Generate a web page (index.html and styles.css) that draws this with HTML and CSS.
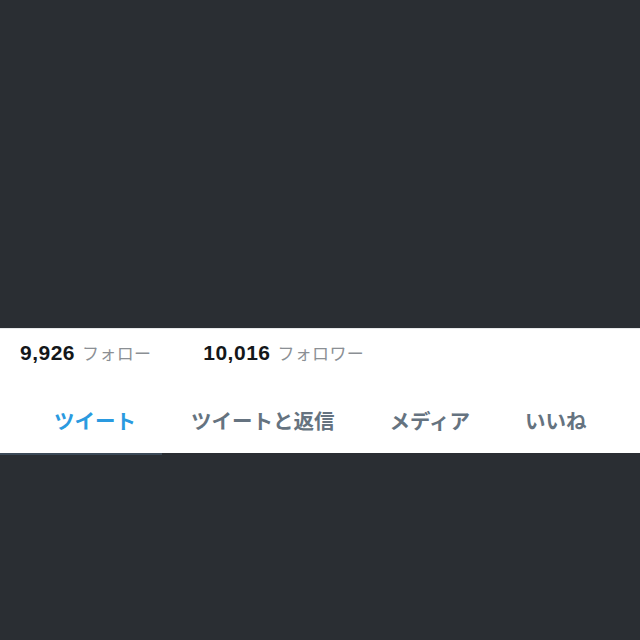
FILE: index.html
```html
<!DOCTYPE html>
<html lang="ja">
<head>
<meta charset="utf-8">
<link rel="stylesheet" href="styles.css">
</head>
<body>
<div class="top"></div>
<div class="band">
  <div class="stats">
    <div class="stat"><span class="num">9,926</span><span class="label">フォロー</span></div>
    <div class="stat"><span class="num">10,016</span><span class="label">フォロワー</span></div>
  </div>
  <div class="tabs">
    <div class="tab active">ツイート</div>
    <div class="tab">ツイートと返信</div>
    <div class="tab">メディア</div>
    <div class="tab">いいね</div>
  </div>
</div>
<div class="bottom">
  <div class="underline"></div>
</div>
</body>
</html>
```
FILE: styles.css
```css
html, body {
  margin: 0;
  padding: 0;
  background: #2a2e33;
  height: 640px;
  overflow: hidden;
}
.top {
  height: 328px;
}
.band {
  background: #ffffff;
  border-top: 1px solid #e6e8ea;
  height: 124px;
  display: flex;
  flex-direction: column;
}
.stats {
  display: flex;
  gap: 52px;
  padding-left: 20px;
  height: 46px;
  align-items: center;
}
.stat {
  display: flex;
  align-items: baseline;
  gap: 7px;
}
.num {
  font-family: "Liberation Sans", Arial, sans-serif;
  font-weight: 700;
  font-size: 21px;
  letter-spacing: 0.5px;
  color: #14171a;
}
.label {
  font-family: "Noto Sans CJK JP", sans-serif;
  font-size: 17px;
  letter-spacing: 0.3px;
  color: #8b8f94;
}
.tabs {
  display: flex;
  gap: 55px;
  padding-left: 54px;
  flex: 1;
  align-items: center;
  padding-top: 12px;
}
.tab {
  font-family: "Noto Sans CJK JP", sans-serif;
  font-weight: 700;
  font-size: 20.5px;
  color: #657380;
  line-height: 1;
}
.tab.active {
  color: #2a9ae0;
}
.bottom {
  height: 188px;
}
.underline {
  width: 162px;
  height: 2px;
  background: #3c4a58;
}
```
